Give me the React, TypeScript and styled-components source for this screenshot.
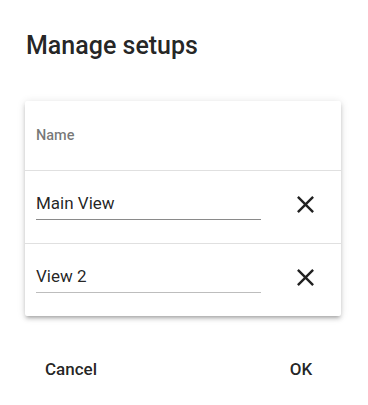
import React from 'react';
import styled, { createGlobalStyle } from 'styled-components';

const GlobalStyle = createGlobalStyle`
  body {
    margin: 0;
    background: #fff;
    font-family: "Roboto", "Helvetica", "Arial", sans-serif;
    color: rgba(0, 0, 0, 0.87);
  }
`;

const Dialog = styled.div`
  width: 368px;
  height: 405px;
  box-sizing: border-box;
  padding: 30px 27px 0 25px;
  display: flex;
  flex-direction: column;
`;

const Title = styled.h2`
  margin: 0 0 39px 1px;
  font-size: 25px;
  line-height: 32px;
  font-weight: 500;
  letter-spacing: 0;
  color: rgba(0, 0, 0, 0.87);
`;

const Paper = styled.div`
  background: #fff;
  border-radius: 2px;
  box-shadow: 0 3px 3px -2px rgba(0, 0, 0, 0.2), 0 3px 4px 0 rgba(0, 0, 0, 0.14),
    0 1px 8px 0 rgba(0, 0, 0, 0.12);
`;

const HeadRow = styled.div`
  height: 69px;
  display: flex;
  align-items: center;
  padding-left: 11px;
  border-bottom: 1px solid #e0e0e0;
  font-size: 14.5px;
  font-weight: 500;
  color: rgba(0, 0, 0, 0.54);
`;

const Row = styled.div<{ $last?: boolean }>`
  display: flex;
  align-items: flex-start;
  padding: 17px 0 23px 11px;
  border-bottom: ${p => (p.$last ? 'none' : '1px solid #e0e0e0')};
`;

const Field = styled.div<{ $line: string }>`
  width: 225px;
  height: 32px;
  box-sizing: border-box;
  padding: 5px 0 7px;
  border-bottom: 1px solid ${p => p.$line};
  font-size: 17px;
  line-height: 20px;
  color: rgba(0, 0, 0, 0.87);
`;

const IconCell = styled.div`
  flex: 1;
  display: flex;
  justify-content: center;
  padding-left: 8px;
  margin-top: 2px;
`;

const Actions = styled.div`
  display: flex;
  justify-content: space-between;
  padding: 37px 8px 0 12px;
`;

const Button = styled.button`
  border: none;
  background: none;
  min-width: 64px;
  padding: 6px 8px;
  font-family: inherit;
  font-size: 17px;
  font-weight: 500;
  line-height: 20px;
  color: rgba(0, 0, 0, 0.87);
  cursor: pointer;
`;

const CloseIcon = () => (
  <svg width="29" height="29" viewBox="0 0 24 24" fill="rgba(0,0,0,0.87)">
    <path d="M19 6.41L17.59 5 12 10.59 6.41 5 5 6.41 10.59 12 5 17.59 6.41 19 12 13.41 17.59 19 19 17.59 13.41 12z" />
  </svg>
);

const setups = [
  { name: 'Main View', line: '#8a8a8a' },
  { name: 'View 2', line: '#bdbdbd' },
];

export default function App() {
  return (
    <>
      <GlobalStyle />
      <Dialog>
        <Title>Manage setups</Title>
        <Paper>
          <HeadRow>Name</HeadRow>
          {setups.map((s, i) => (
            <Row key={s.name} $last={i === setups.length - 1}>
              <Field $line={s.line}>{s.name}</Field>
              <IconCell>
                <CloseIcon />
              </IconCell>
            </Row>
          ))}
        </Paper>
        <Actions>
          <Button>Cancel</Button>
          <Button>OK</Button>
        </Actions>
      </Dialog>
    </>
  );
}
